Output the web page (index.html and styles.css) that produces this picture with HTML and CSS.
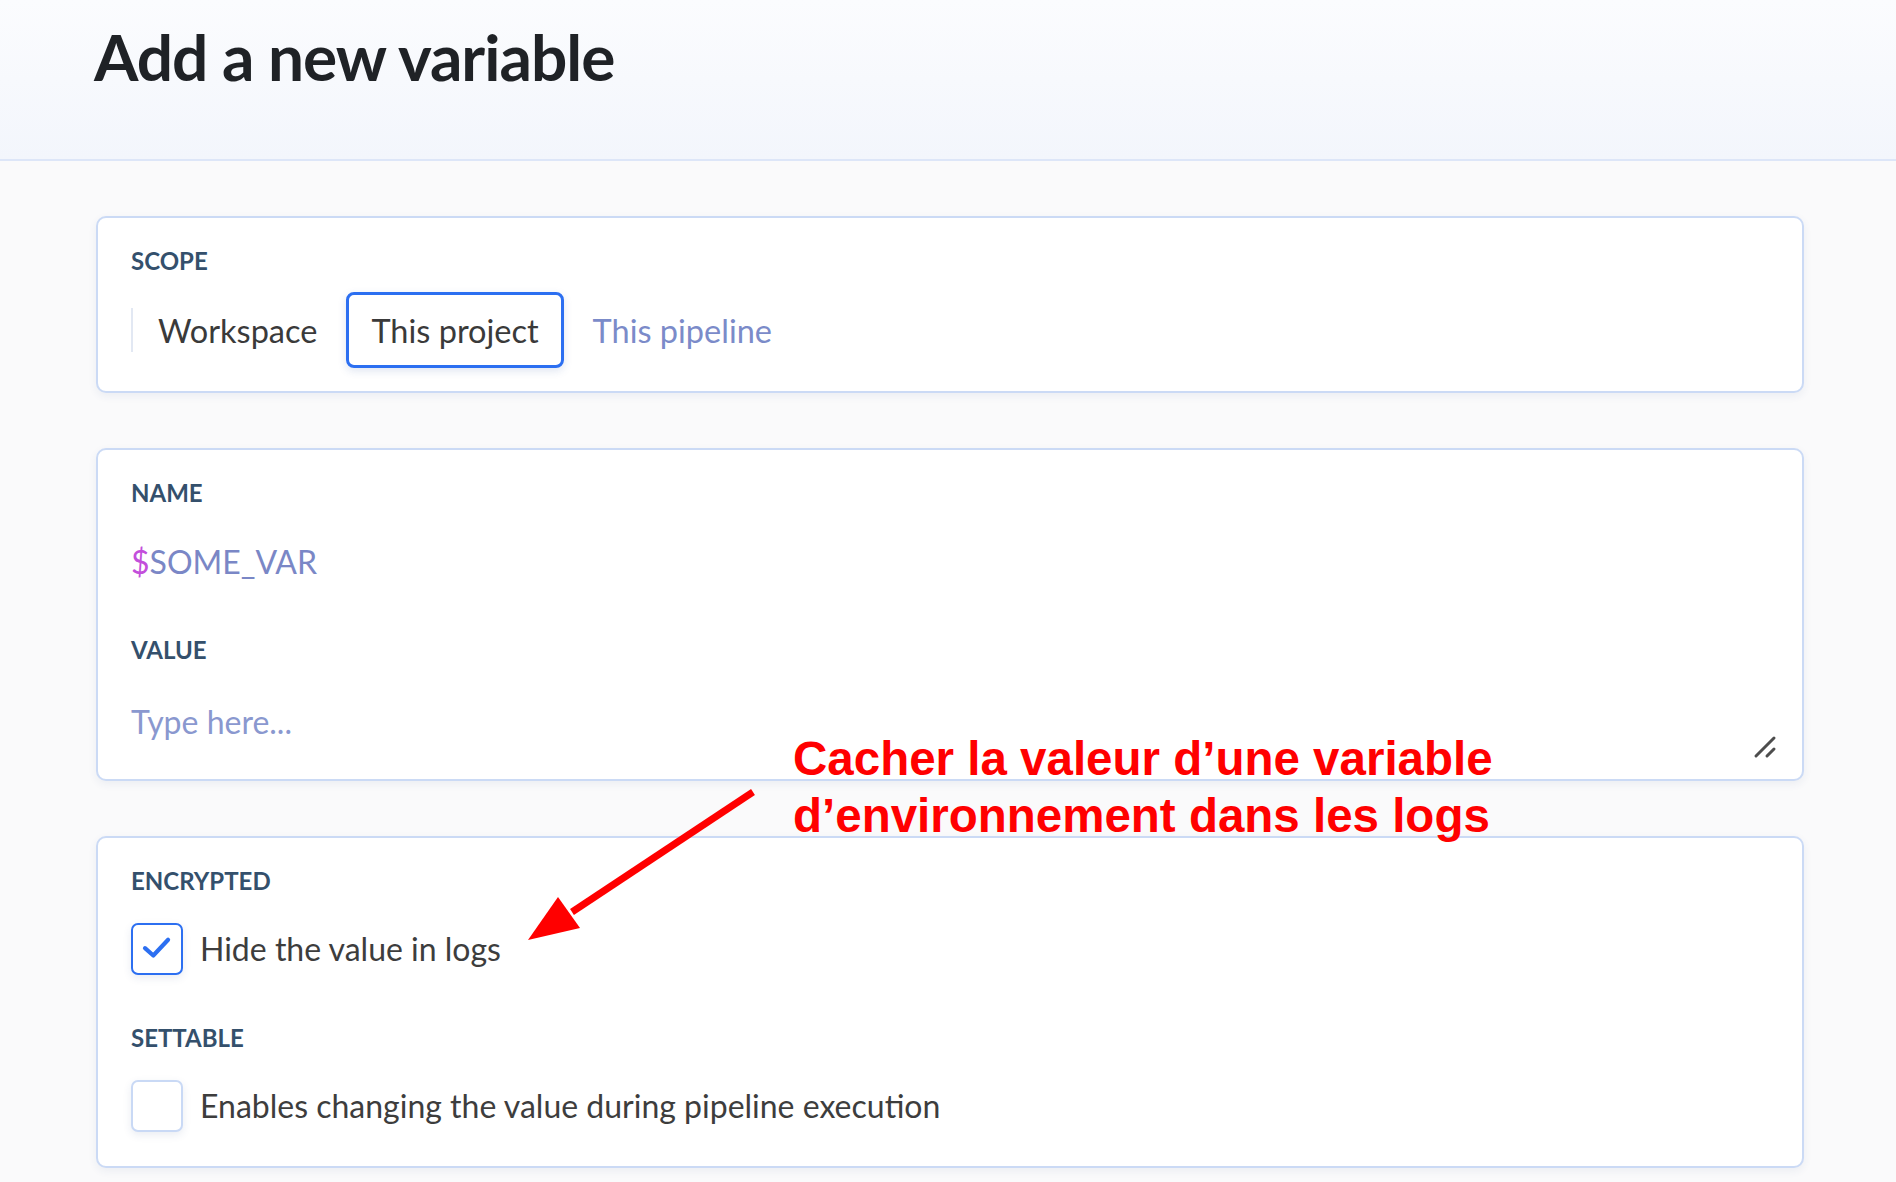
FILE: index.html
```html
<!DOCTYPE html>
<html lang="en">
<head>
<meta charset="utf-8">
<title>Add a new variable</title>
<link rel="stylesheet" href="styles.css">
</head>
<body>
<header class="page-header">
  <h1 class="page-title">Add a new variable</h1>
</header>
<main class="content">
  <section class="card card-scope">
    <div class="field-label">Scope</div>
    <div class="tabs">
      <span class="tabs-divider"></span>
      <button class="tab">Workspace</button>
      <button class="tab tab-active">This project</button>
      <button class="tab tab-link">This pipeline</button>
    </div>
  </section>
  <section class="card card-fields">
    <div class="field-label">Name</div>
    <div class="name-value"><span class="dollar">$</span>SOME_VAR</div>
    <div class="field-label label-spaced">Value</div>
    <div class="placeholder">Type here...</div>
    <svg class="resize-handle" viewBox="0 0 24 24" width="24" height="24">
      <path d="M3 21 L21 3 M14 21 L21 14" stroke="#4d4d4d" stroke-width="3" stroke-linecap="round" fill="none"/>
    </svg>
  </section>
  <section class="card card-flags">
    <div class="field-label">Encrypted</div>
    <div class="check-row">
      <span class="checkbox checkbox-on">
        <svg viewBox="0 0 52 52" width="48" height="48"><path d="M13 25 L22 33 L38 16" stroke="#2c6ff1" stroke-width="4.5" stroke-linecap="round" stroke-linejoin="round" fill="none"/></svg>
      </span>
      <span class="check-text">Hide the value in logs</span>
    </div>
    <div class="field-label label-spaced-sm">Settable</div>
    <div class="check-row">
      <span class="checkbox"></span>
      <span class="check-text">Enables changing the value during pipeline execution</span>
    </div>
  </section>
</main>
<div class="annotation">Cacher la valeur d’une variable<br>d’environnement dans les logs</div>
<svg class="annotation-arrow" viewBox="0 0 260 170" width="260" height="170">
  <line x1="243" y1="12" x2="62" y2="132" stroke="#ff0000" stroke-width="7"/>
  <polygon points="18,160 48,117 70,148" fill="#ff0000"/>
</svg>
</body>
</html>
```
FILE: styles.css
```css
html, body {
  margin: 0;
  padding: 0;
}
body {
  position: relative;
  min-height: 1182px;
  background: #fafafb;
  font-family: Lato, "Noto Sans", sans-serif;
  color: #3b3b3b;
}
.page-header {
  box-sizing: border-box;
  height: 161px;
  padding: 19px 0 0 94px;
  background: linear-gradient(180deg, #fbfcfe 0%, #f3f6fc 100%);
  border-bottom: 2px solid #dde6f8;
}
.page-title {
  margin: 0;
  font: 700 64px/1.2 Lato, sans-serif;
  letter-spacing: -1px;
  color: #1f2226;
}
.content {
  display: flex;
  flex-direction: column;
  gap: 55px;
  padding: 55px 92px 0 96px;
}
.card {
  position: relative;
  background: #fff;
  border: 2px solid #cbdaf5;
  border-radius: 10px;
  box-shadow: 0 3px 8px rgba(40, 70, 130, 0.07);
  padding: 29px 33px 0;
}
.card-scope { padding-bottom: 23px; }
.card-fields { padding-bottom: 37px; }
.card-flags { padding-bottom: 34px; }

.field-label {
  font: 700 24px/28px Lato, sans-serif;
  text-transform: uppercase;
  color: #34506c;
}
.label-spaced { margin-top: 54px; }
.label-spaced-sm { margin-top: 49px; }

.tabs {
  display: flex;
  align-items: center;
  height: 76px;
  margin-top: 17px;
}
.tabs-divider {
  width: 2px;
  height: 44px;
  background: #e2e8f3;
}
.tab {
  box-sizing: border-box;
  height: 76px;
  padding: 0 22px;
  border: 3px solid transparent;
  border-radius: 8px;
  background: none;
  font: 400 32.5px Lato, sans-serif;
  color: #3a3a3a;
}
.tab + .tab { margin-left: 4px; }
.tab-active {
  border-color: #2c6ff1;
  box-shadow: 0 3px 8px rgba(40, 80, 160, 0.15);
}
.tab-link { color: #7b8bc9; }

.name-value {
  margin-top: 35px;
  font: 400 32px/40px Lato, sans-serif;
  color: #7a87c6;
}
.dollar { color: #c34fdb; }
.placeholder {
  margin-top: 38px;
  font: 400 32px/40px Lato, sans-serif;
  color: #8a98cf;
}
.resize-handle {
  position: absolute;
  right: 25px;
  bottom: 20px;
}

.check-row {
  display: flex;
  align-items: center;
  gap: 17px;
  margin-top: 28px;
}
.checkbox {
  box-sizing: border-box;
  flex: none;
  width: 52px;
  height: 52px;
  display: flex;
  align-items: center;
  justify-content: center;
  border: 2px solid #c9d9f5;
  border-radius: 7px;
  box-shadow: 0 3px 8px rgba(40, 70, 130, 0.10);
  background: #fff;
}
.checkbox-on { border-color: #2c6ff1; }
.check-text {
  font: 400 32px/40px Lato, sans-serif;
  color: #3d3d3d;
}

.annotation {
  position: absolute;
  left: 793px;
  top: 730px;
  font: 700 47.5px/57px "Liberation Sans", Arial, sans-serif;
  color: #ff0000;
  white-space: nowrap;
}
.annotation-arrow {
  position: absolute;
  left: 510px;
  top: 780px;
}
```
